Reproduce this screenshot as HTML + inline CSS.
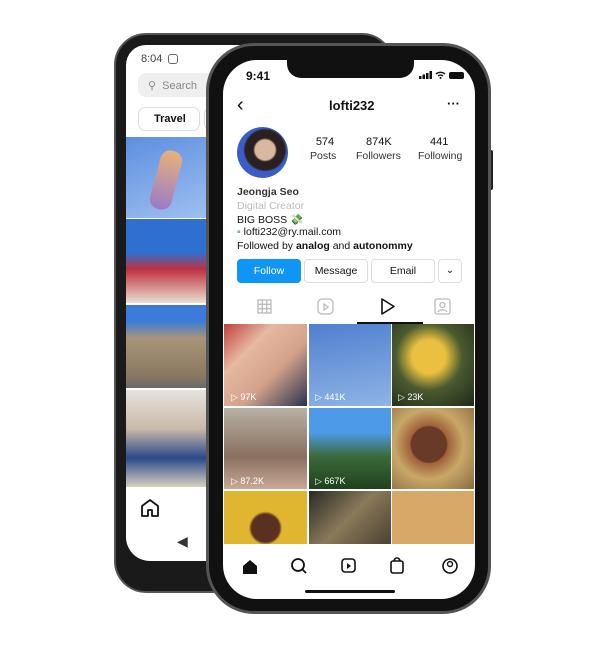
<!DOCTYPE html><html><head><style>
*{margin:0;padding:0;box-sizing:border-box}
body{width:597px;height:657px;background:#fff;position:relative;overflow:hidden;font-family:"Liberation Sans",sans-serif;color:#111}
.a{position:absolute}
.t{position:absolute;white-space:nowrap}
</style></head><body>
<!-- back phone -->
<div class="a" style="left:114px;top:33px;width:280px;height:560px;background:#1a1a1a;border-radius:32px;border:2px solid #555"></div>
<div class="a" style="left:126px;top:45px;width:260px;height:516px;background:#fff;border-radius:20px 20px 24px 24px"></div>
<div class="t" style="left:141px;top:53px;font-size:11px;color:#444">8:04</div>
<div class="a" style="left:168px;top:54px;width:10px;height:10px;border:1.5px solid #666;border-radius:3px"></div>
<div class="a" style="left:138px;top:73px;width:90px;height:24px;background:#efefef;border-radius:8px"></div>
<div class="t" style="left:148px;top:79px;font-size:11px;color:#888">⚲&nbsp; Search</div>
<div class="a" style="left:138px;top:107px;width:62px;height:24px;border:1px solid #ddd;border-radius:7px"></div>
<div class="a" style="left:204px;top:107px;width:30px;height:24px;border:1px solid #ddd;border-radius:7px"></div>
<div class="t" style="left:154px;top:113px;font-size:11px;font-weight:bold">Travel</div>
<div class="a" style="left:126px;top:137px;width:84px;height:81px;background:linear-gradient(160deg,#5d8fe0,#9fc0f0)"></div>
<div class="a" style="left:155px;top:150px;width:22px;height:60px;background:linear-gradient(#e8b27a,#9b7ac8);border-radius:10px;transform:rotate(15deg)"></div>
<div class="a" style="left:126px;top:219px;width:84px;height:84px;background:linear-gradient(#2f6fd0 40%,#c03040 60%,#e8e0d0)"></div>
<div class="a" style="left:126px;top:305px;width:84px;height:83px;background:linear-gradient(#3d7bd8 20%,#a89478 40%,#8a7a62 85%,#6a6a6a)"></div>
<div class="a" style="left:126px;top:390px;width:84px;height:97px;background:linear-gradient(#e7e3de,#c9b9a8 40%,#2a4a8a 70%,#d8cfc0)"></div>
<svg class="a" style="left:140px;top:498px" width="20" height="20" viewBox="0 0 20 20"><path d="M2 8 L10 2 L18 8 V18 H12 V12 H8 V18 H2Z" fill="none" stroke="#111" stroke-width="1.8" stroke-linejoin="round"/></svg>
<div class="t" style="left:177px;top:533px;font-size:14px;color:#333">◀</div>
<!-- front phone -->
<div class="a" style="left:489px;top:150px;width:4px;height:40px;background:#222;border-radius:2px"></div>
<div class="a" style="left:206px;top:43px;width:285px;height:571px;background:#111;border-radius:48px;border:3px solid #555"></div>
<div class="a" style="left:223px;top:60px;width:252px;height:539px;background:#fff;border-radius:34px;overflow:hidden">
 <div class="a" style="left:64px;top:0;width:127px;height:18px;background:#111;border-radius:0 0 14px 14px"></div>
 <div class="t" style="left:23px;top:9px;font-size:12px;font-weight:bold">9:41</div>
 <svg class="a" style="left:196px;top:10px" width="50" height="10" viewBox="0 0 50 10"><rect x="0" y="6" width="2.5" height="3" fill="#111"/><rect x="3.5" y="4.5" width="2.5" height="4.5" fill="#111"/><rect x="7" y="3" width="2.5" height="6" fill="#111"/><rect x="10.5" y="1" width="2.5" height="8" fill="#111"/><path d="M17 4a7 7 0 0 1 9 0M19 6a4 4 0 0 1 5 0" fill="none" stroke="#111" stroke-width="1.4"/><circle cx="21.5" cy="8" r="1" fill="#111"/><rect x="30" y="2" width="15" height="7" rx="2" fill="#111"/></svg>
 <div class="t" style="left:14px;top:34px;font-size:20px">‹</div>
 <div class="t" style="left:106px;top:38px;font-size:13px;font-weight:bold">lofti232</div>
 <div class="t" style="left:224px;top:36px;font-size:13px;font-weight:bold">···</div>
 <div class="a" style="left:14px;top:67px;width:51px;height:51px;border-radius:50%;background:radial-gradient(circle at 55% 45%,#d9b8a0 0 25%,#2a2020 30% 50%,#3b5dc8 55%)"></div>
 <div class="t" style="left:90px;top:76px;font-size:11px;text-align:center;width:24px">574</div>
 <div class="t" style="left:87px;top:90px;font-size:10.5px;color:#333">Posts</div>
 <div class="t" style="left:143px;top:76px;font-size:11px">874K</div>
 <div class="t" style="left:133px;top:90px;font-size:10.5px;color:#333">Followers</div>
 <div class="t" style="left:207px;top:76px;font-size:11px">441</div>
 <div class="t" style="left:195px;top:90px;font-size:10.5px;color:#333">Following</div>
 <div class="t" style="left:14px;top:126px;font-size:10.5px;font-weight:bold;color:#333">Jeongja Seo</div>
 <div class="t" style="left:14px;top:140px;font-size:10.5px;color:#bbb">Digital Creator</div>
 <div class="t" style="left:14px;top:153px;font-size:10.5px">BIG BOSS 💸</div>
 <div class="t" style="left:14px;top:166px;font-size:10.5px"><span style="color:#8aa">▪</span> lofti232@ry.mail.com</div>
 <div class="t" style="left:14px;top:180px;font-size:10.5px">Followed by <b>analog</b> and <b>autonommy</b></div>
 <div class="a" style="left:14px;top:199px;width:64px;height:24px;background:#0f95f6;border-radius:4px;color:#fff;font-size:10.5px;text-align:center;line-height:24px">Follow</div>
 <div class="a" style="left:81px;top:199px;width:64px;height:24px;border:1px solid #ddd;border-radius:4px;font-size:10.5px;text-align:center;line-height:22px">Message</div>
 <div class="a" style="left:148px;top:199px;width:64px;height:24px;border:1px solid #ddd;border-radius:4px;font-size:10.5px;text-align:center;line-height:22px">Email</div>
 <div class="a" style="left:215px;top:199px;width:24px;height:24px;border:1px solid #ddd;border-radius:4px;font-size:10px;text-align:center;line-height:22px">⌄</div>
 <svg class="a" style="left:0;top:236px" width="252" height="22" viewBox="0 0 252 22">
  <g fill="none" stroke="#bbb" stroke-width="1.3"><rect x="35" y="4" width="13" height="13"/><path d="M39.3 4v13M43.7 4v13M35 8.3h13M35 12.7h13"/>
  <rect x="95" y="3" width="15" height="15" rx="4"/><path d="M101 8v6l4-3z"/>
  <rect x="212" y="3" width="15" height="15" rx="2"/><circle cx="219.5" cy="9" r="2.5"/><path d="M215 16a5 4 0 0 1 9 0"/></g>
  <path d="M159 3v15l12-7.5z" fill="none" stroke="#111" stroke-width="1.6" stroke-linejoin="round"/>
 </svg>
 <div class="a" style="left:134px;top:262px;width:66px;height:2px;background:#111"></div>
 <div class="a" style="left:1px;top:264px;width:83px;height:82px;background:linear-gradient(135deg,#c04040,#e6b8a0 30%,#d4a28a 60%,#2a3350)"></div>
 <div class="a" style="left:86px;top:264px;width:82px;height:82px;background:linear-gradient(170deg,#4f7fcf,#8fb4e6)"></div>
 <div class="a" style="left:169px;top:264px;width:82px;height:82px;background:radial-gradient(circle at 45% 40%,#e9c040 0 25%,#4a5a30 50%,#1e2a18)"></div>
 <div class="a" style="left:1px;top:348px;width:83px;height:81px;background:linear-gradient(#b8b0a4,#8a7060 60%,#c9a896)"></div>
 <div class="a" style="left:86px;top:348px;width:82px;height:81px;background:linear-gradient(#4d9be8 30%,#3a6a3a 60%,#20401e)"></div>
 <div class="a" style="left:169px;top:348px;width:82px;height:81px;background:radial-gradient(circle at 45% 45%,#6a3a28 0 28%,#a0623a 30%,#c8a868 55%,#8a6a40)"></div>
 <div class="a" style="left:1px;top:431px;width:83px;height:53px;background:radial-gradient(circle at 50% 70%,#5a3020 0 25%,#e0b530 30%)"></div>
 <div class="a" style="left:86px;top:431px;width:82px;height:53px;background:linear-gradient(135deg,#2a2a26,#8a7a5a 50%,#4a4030)"></div>
 <div class="a" style="left:169px;top:431px;width:82px;height:53px;background:#d8a868"></div>
 <div class="t" style="left:8px;top:332px;font-size:9px;color:#fff">▷ 97K</div>
 <div class="t" style="left:92px;top:332px;font-size:9px;color:#fff">▷ 441K</div>
 <div class="t" style="left:175px;top:332px;font-size:9px;color:#fff">▷ 23K</div>
 <div class="t" style="left:8px;top:416px;font-size:9px;color:#fff">▷ 87.2K</div>
 <div class="t" style="left:92px;top:416px;font-size:9px;color:#fff">▷ 667K</div>
 <svg class="a" style="left:0;top:484px" width="252" height="55" viewBox="0 0 252 55">
  <path d="M20 22 L27 16 L34 22 V30 H20Z" fill="#111"/>
  <circle cx="75" cy="21" r="6" fill="none" stroke="#111" stroke-width="1.8"/><path d="M79 25l4 4" stroke="#111" stroke-width="1.8"/>
  <rect x="119" y="15" width="13" height="13" rx="3" fill="none" stroke="#111" stroke-width="1.6"/><path d="M124 19v6l4-3z" fill="#111"/>
  <rect x="168" y="17" width="12" height="12" rx="2" fill="none" stroke="#111" stroke-width="1.6"/><path d="M171 17a3 3 0 0 1 6 0" fill="none" stroke="#111" stroke-width="1.6"/>
  <circle cx="227" cy="22" r="7" fill="none" stroke="#111" stroke-width="1.6"/><circle cx="227" cy="20" r="2.5" fill="none" stroke="#111" stroke-width="1.4"/>
  <rect x="82" y="46" width="90" height="3" rx="1.5" fill="#111"/>
 </svg>
</div>
</body></html>
